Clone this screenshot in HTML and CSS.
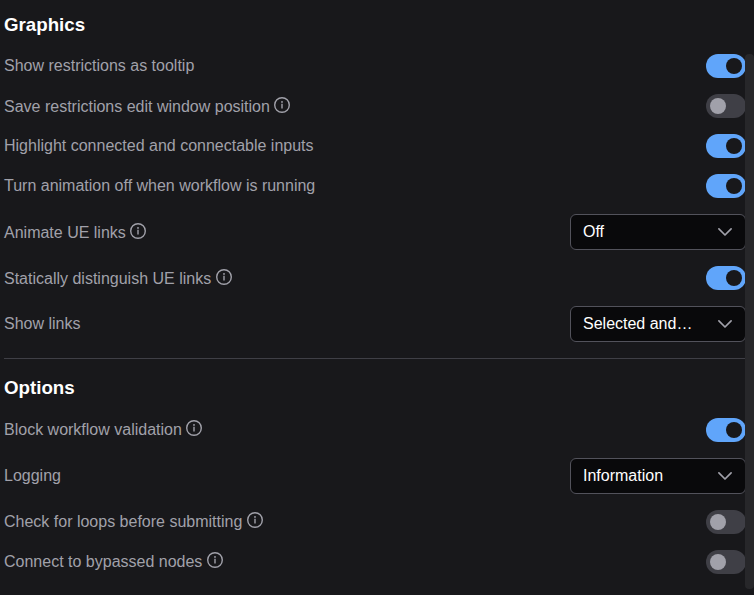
FILE: index.html
```html
<!DOCTYPE html>
<html lang="en">
<head>
<meta charset="utf-8">
<title>Settings</title>
<link rel="stylesheet" href="styles.css">
</head>
<body>
<svg width="0" height="0" class="defs">
  <symbol id="info" viewBox="0 0 16 16"><circle cx="8" cy="8" r="7.3" fill="none" stroke="currentColor" stroke-width="1.4"/><path d="M8 6.8v4.8" fill="none" stroke="currentColor" stroke-width="1.4"/><circle cx="8" cy="4.9" r=".95" fill="currentColor"/></symbol>
  <symbol id="chevron" viewBox="0 0 16 16"><path d="M1.9 4.9 8 11 14.1 4.9" fill="none" stroke="currentColor" stroke-width="1.7" stroke-linecap="round" stroke-linejoin="round"/></symbol>
</svg>
<main class="panel">
  <section class="group">
    <h3>Graphics</h3>
    <div class="row"><span class="label">Show restrictions as tooltip</span><span class="switch on"></span></div>
    <div class="row"><span class="label low">Save restrictions edit window position</span><svg class="info"><use href="#info"/></svg><span class="switch"></span></div>
    <div class="row"><span class="label">Highlight connected and connectable inputs</span><span class="switch on"></span></div>
    <div class="row"><span class="label">Turn animation off when workflow is running</span><span class="switch on"></span></div>
    <div class="row"><span class="label low">Animate UE links</span><svg class="info"><use href="#info"/></svg><div class="select"><span>Off</span><svg><use href="#chevron"/></svg></div></div>
    <div class="row"><span class="label low">Statically distinguish UE links</span><svg class="info"><use href="#info"/></svg><span class="switch on"></span></div>
    <div class="row"><span class="label">Show links</span><div class="select"><span>Selected and…</span><svg><use href="#chevron"/></svg></div></div>
  </section>
  <hr>
  <section class="group">
    <h3>Options</h3>
    <div class="row"><span class="label">Block workflow validation</span><svg class="info high"><use href="#info"/></svg><span class="switch on"></span></div>
    <div class="row"><span class="label">Logging</span><div class="select"><span>Information</span><svg><use href="#chevron"/></svg></div></div>
    <div class="row"><span class="label">Check for loops before submitting</span><svg class="info high"><use href="#info"/></svg><span class="switch"></span></div>
    <div class="row"><span class="label">Connect to bypassed nodes</span><svg class="info high"><use href="#info"/></svg><span class="switch"></span></div>
  </section>
</main>
<div class="scrollbar"></div>
</body>
</html>
```
FILE: styles.css
```css
* { box-sizing: border-box; }
body {
  margin: 0;
  height: 595px;
  overflow: hidden;
  background: #18181b;
  color: #a1a1aa;
  font: 16px/18px "Liberation Sans", Arial, sans-serif;
}
.defs { position: absolute; }
.panel { width: 746px; padding: 14px 0 0 4px; }
.group { display: flex; flex-direction: column; gap: 16px; }
h3 {
  margin: 0 0 2px;
  height: 22px;
  font-size: 18.72px;
  line-height: 22px;
  color: #fff;
}
.row { display: flex; align-items: center; }
.label { margin-bottom: 0; }
.label.low { margin-top: 2px; }
.info { width: 16px; height: 16px; margin: 0 0 2px 4.5px; }
.info.high { margin-bottom: 4px; }
.switch {
  width: 40px;
  height: 24px;
  margin-left: auto;
  padding: 4px;
  border-radius: 12px;
  background: #3f3f46;
}
.switch::before {
  content: "";
  display: block;
  width: 16px;
  height: 16px;
  border-radius: 50%;
  background: #a1a1aa;
}
.switch.on { background: #60a5fa; }
.switch.on::before { margin-left: 16px; background: #18181b; }
.select {
  display: flex;
  align-items: center;
  justify-content: space-between;
  width: 176px;
  height: 36px;
  margin-left: auto;
  padding: 0 12px;
  border: 1px solid #52525b;
  border-radius: 6px;
  background: #09090b;
  color: #fff;
}
.select span { white-space: nowrap; }
.select svg { width: 16px; height: 16px; color: #a1a1aa; }
hr { height: 1px; margin: 16px 0 18px; border: 0; background: #3f3f46; }
hr + .group h3 { margin-bottom: 3px; }
.scrollbar {
  position: absolute;
  top: 54px;
  left: 745px;
  width: 9px;
  height: 535px;
  border-radius: 4px;
  background: #27272a;
}
```
